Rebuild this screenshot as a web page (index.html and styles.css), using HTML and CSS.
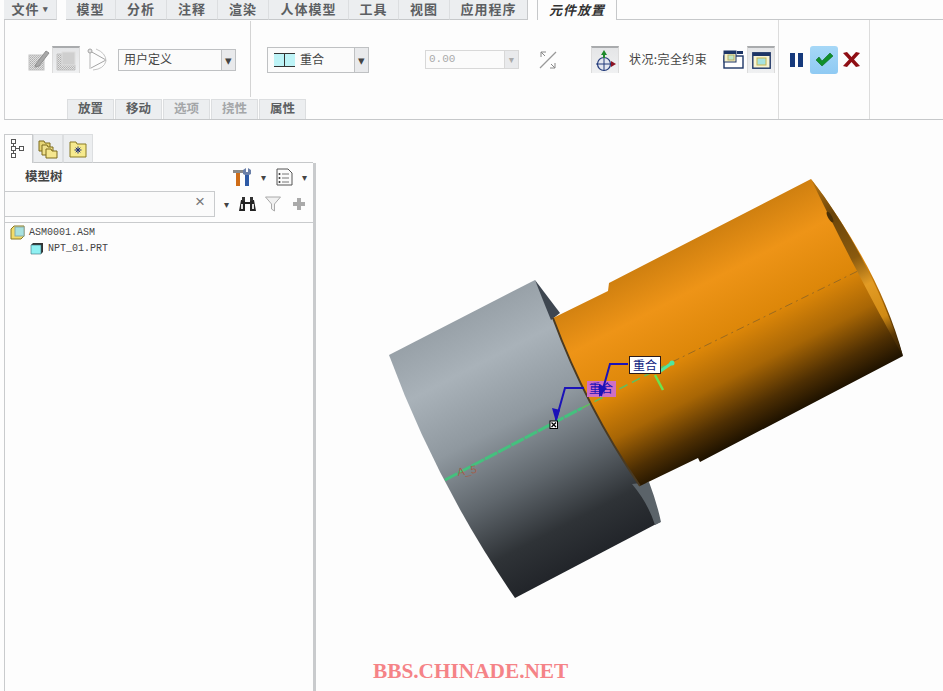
FILE: index.html
```html
<!DOCTYPE html>
<html lang="zh">
<head>
<meta charset="utf-8">
<title>元件放置</title>
<link rel="stylesheet" href="styles.css">
</head>
<body>
<div class="page">
  <header class="ribbon">
    <nav class="tabbar">
      <div class="tab tab-file">文件 <span class="caret-small">▾</span></div>
      <div class="tab-group">
        <div class="tab w50">模型</div>
        <div class="tab w51">分析</div>
        <div class="tab w51">注释</div>
        <div class="tab w51">渲染</div>
        <div class="tab w80">人体模型</div>
        <div class="tab w50">工具</div>
        <div class="tab w51">视图</div>
        <div class="tab w78">应用程序</div>
      </div>
      <div class="tab tab-active">元件放置</div>
      <div class="tabbar-rest"></div>
    </nav>
    <div class="ribbon-body">
      <div class="ribbon-main">
        <div class="controls">
          <svg class="ic ic-a" width="22" height="22" viewBox="0 0 22 22"><defs><pattern id="hatch" width="2" height="2" patternUnits="userSpaceOnUse"><rect width="2" height="2" fill="#e0e0e0"/><rect width="1" height="1" fill="#b0b0b0"/><rect x="1" y="1" width="1" height="1" fill="#bcbcbc"/></pattern></defs><rect x="1" y="6" width="15" height="15" fill="url(#hatch)" stroke="#c4c4c4"/><path d="M8 15 L18 2 L21 4 L11 17 L7 18 Z" fill="#a8a8a8" stroke="#8f8f8f"/></svg>
          <div class="toggle toggle-on">
            <svg width="20" height="20" viewBox="0 0 20 20"><path d="M1 3h5v11h13v5H1z" fill="url(#hatch)" stroke="#c4c4c4"/><rect x="6" y="1" width="13" height="13" fill="#cfcfcf" stroke="#dedede"/></svg>
          </div>
          <svg class="ic ic-c" width="20" height="24" viewBox="0 0 20 24"><path d="M3 3 L19 12 L4 20" fill="none" stroke="#a5a5a5"/><path d="M3 3 V21" stroke="#b5b5b5" fill="none"/><path d="M9 1 Q19 5 19 13 Q17 21 6 22" fill="none" stroke="#c4c4c4"/><circle cx="3" cy="3" r="2" fill="#e2e2e2" stroke="#a5a5a5"/></svg>
          <div class="select select-user"><span class="select-text">用户定义</span><span class="select-btn">▾</span></div>
          <div class="ribbon-sep"></div>
          <div class="select select-constraint">
            <svg width="21" height="14" viewBox="0 0 21 14"><rect width="21" height="14" fill="#bdf3f6"/><path d="M0 .5h21M0 13.5h21M10.5 0v14" stroke="#333" fill="none"/></svg>
            <span class="select-text">重合</span><span class="select-btn">▾</span>
          </div>
          <div class="select select-offset"><span class="select-text muted">0.00</span><span class="select-btn muted">▾</span></div>
          <svg class="ic ic-flip" width="18" height="20" viewBox="0 0 18 20"><path d="M1 18 L17 2" stroke="#999" stroke-width="1.3"/><path d="M2 2h5M2 2v5M2 2l4 4" stroke="#888" fill="none"/><path d="M16 18h-5M16 18v-5M16 18l-4-4" stroke="#888" fill="none"/></svg>
          <div class="toggle toggle-move">
            <svg width="24" height="24" viewBox="0 0 24 24"><circle cx="11" cy="15" r="6.5" fill="#e3e6ef" stroke="#223a7a" stroke-width="1.2"/><path d="M3 15h16M11 7v15" stroke="#223a7a"/><path d="M11 1 L14 6 L8 6 Z" fill="#1f8a2c"/><path d="M11 6v3" stroke="#1f8a2c" stroke-width="2"/><path d="M23 15 L18 12 V18 Z" fill="#8c1222"/></svg>
          </div>
          <span class="status">状况:完全约束</span>
          <svg class="ic ic-win1" width="21" height="19" viewBox="0 0 21 19"><rect x="1" y="6" width="19" height="12" fill="#fff" stroke="#1d3566" stroke-width="1.4"/><rect x="1" y="1" width="12" height="11" fill="#f5f0c8" stroke="#1d3566"/><rect x="1" y="1" width="12" height="3" fill="#1d3566"/><rect x="5" y="5" width="6" height="5" fill="#bfe6c8" stroke="#b9ae66"/><rect x="14" y="1" width="6" height="3" fill="#1d3566"/></svg>
          <div class="toggle toggle-win">
            <svg width="19" height="17" viewBox="0 0 19 17"><rect x=".8" y=".8" width="17.4" height="15.4" fill="#f7f3d3" stroke="#1d3566" stroke-width="1.4"/><rect x="1" y="1" width="17" height="3" fill="#1d3566"/><rect x="5" y="6" width="9" height="7" fill="#a6e2e0" stroke="#c8b64e"/></svg>
          </div>
        </div>
        <div class="subtabs">
          <div class="subtab">放置</div>
          <div class="subtab">移动</div>
          <div class="subtab subtab-off">选项</div>
          <div class="subtab subtab-off">挠性</div>
          <div class="subtab">属性</div>
        </div>
      </div>
      <div class="actions">
        <svg class="act-pause" width="13" height="14" viewBox="0 0 13 14"><rect width="5" height="14" fill="#16397c"/><rect x="8" width="5" height="14" fill="#16397c"/></svg>
        <div class="act-ok">
          <svg width="18" height="15" viewBox="0 0 18 15"><path d="M1 8 L4 5 L7 9 L15 1 L18 4 L7 14 Z" fill="#0f8f2a" stroke="#0a6b1e" stroke-width=".6"/></svg>
        </div>
        <svg class="act-x" width="17" height="15" viewBox="0 0 17 15"><path d="M0 1 L4 0 L8.500 5 L13 0 L17 1 L11 7.500 L17 14 L13 15 L8.500 10 L4 15 L0 14 L6 7.500 Z" fill="#8f0e14"/></svg>
      </div>
      <div class="ribbon-fill"></div>
    </div>
  </header>

  <main class="workspace">
    <aside class="side">
      <div class="side-tabs">
        <div class="stab stab-on">
          <svg width="16" height="20" viewBox="0 0 16 20"><g fill="#fff" stroke="#555"><rect x=".5" y=".5" width="4" height="4"/><rect x=".5" y="7.500" width="4" height="4"/><rect x=".5" y="14.500" width="4" height="4"/><rect x="8.500" y="7.500" width="4" height="4"/></g><path d="M2.500 5v2M2.500 12v2M5 9.500h3" stroke="#555"/></svg>
        </div>
        <div class="stab">
          <svg width="20" height="20" viewBox="0 0 20 20"><g stroke="#7d6a1c" fill="#e6d475"><path d="M1 5V2h5l1 2h5v8H1z"/><path d="M4 9V6h5l1 2h5v8H4z" fill="#efe08c"/><path d="M8 13v-3h5l1 2h5v7H8z" fill="#f5e68f"/></g></svg>
        </div>
        <div class="stab">
          <svg width="18" height="18" viewBox="0 0 18 18"><path d="M1 4V2h6l1 2h9v13H1z" fill="#f6ea8e" stroke="#8a7a25"/><path d="M9 6.500v7M5.500 10h7M6.700 7.700l4.600 4.600M11.300 7.700l-4.600 4.600" stroke="#1b2d7a"/></svg>
        </div>
        <div class="stab-rest"></div>
      </div>
      <div class="panel">
        <div class="panel-head">
          <span class="panel-title">模型树</span>
          <svg class="tool-hammer" width="19" height="20" viewBox="0 0 19 20"><path d="M0 3h10l1 3H7v13H3V6H0z" fill="#8a8a8a"/><rect x="3" y="6" width="4" height="13" fill="#cf6d18"/><path d="M13 1 L13 5 L15 5 L15 1 L18 3 L18 7 L16 8 V19 H12 V8 L10 7 V3 Z" fill="#6a7fa8"/><rect x="12" y="8" width="4" height="11" fill="#2e5aa6"/></svg>
          <span class="mini-caret mc1">▾</span>
          <svg class="tool-doc" width="17" height="18" viewBox="0 0 17 18"><path d="M1 1h11l4 4v12H1z" fill="#fbfbfb" stroke="#555"/><path d="M6 6h7M6 10h7M6 14h7" stroke="#777"/><circle cx="3.500" cy="6" r="1" fill="#333"/><circle cx="3.500" cy="10" r="1" fill="#333"/><circle cx="3.500" cy="14" r="1" fill="#333"/></svg>
          <span class="mini-caret mc2">▾</span>
        </div>
        <div class="panel-search">
          <div class="search-box"><span class="search-x">×</span></div>
          <span class="mini-caret mc3">▾</span>
          <svg class="tool-bino" width="17" height="16" viewBox="0 0 17 16"><path d="M2 4h4v2h5V4h4l2 11h-6V8H6v7H0z" fill="#222"/><rect x="3" y="1" width="3" height="4" fill="#333"/><rect x="11" y="1" width="3" height="4" fill="#333"/><rect x="2" y="8" width="2" height="5" fill="#ddd"/><rect x="13" y="8" width="2" height="5" fill="#ddd"/></svg>
          <svg class="tool-funnel" width="16" height="16" viewBox="0 0 16 16"><path d="M.5 1h15L9.500 8v7l-3-2V8z" fill="#f1f1f1" stroke="#aaa"/></svg>
          <svg class="tool-plus" width="12" height="12" viewBox="0 0 12 12"><path d="M4 0h4v4h4v4H8v4H4V8H0V4h4z" fill="#aaa"/></svg>
        </div>
        <ul class="tree">
          <li class="tree-row">
            <svg width="16" height="15" viewBox="0 0 16 15"><path d="M1 4 L4 1 H14 V11 L11 14 H1 Z" fill="#f3dc6a" stroke="#8a7a25"/><rect x="5" y="2" width="9" height="9" fill="#a8e2e0" stroke="#8aa"/></svg>
            <span>ASM0001.ASM</span>
          </li>
          <li class="tree-row tree-child">
            <svg width="14" height="13" viewBox="0 0 14 13"><path d="M1 3 L3 1 H13 V10 L11 12 H1 Z" fill="#333"/><path d="M1 3 H11 V12 H1 Z" fill="#8ff0f2" stroke="#3a6f78" stroke-width=".6"/></svg>
            <span>NPT_01.PRT</span>
          </li>
        </ul>
      </div>
    </aside>
    <div class="divider"></div>
    <section class="viewport">
      <svg class="model" width="627" height="571" viewBox="316 120 627 571">
        <defs>
          <linearGradient id="gGray" gradientUnits="userSpaceOnUse" x1="535" y1="280" x2="660" y2="522">
            <stop offset="0" stop-color="#98a1a8"/>
            <stop offset=".18" stop-color="#a9b2b9"/>
            <stop offset=".42" stop-color="#8f989f"/>
            <stop offset=".65" stop-color="#5f666c"/>
            <stop offset=".85" stop-color="#2f3337"/>
            <stop offset="1" stop-color="#22252a"/>
          </linearGradient>
          <linearGradient id="gOrange" gradientUnits="userSpaceOnUse" x1="811" y1="179" x2="903" y2="356">
            <stop offset="0" stop-color="#d08010"/>
            <stop offset=".22" stop-color="#ee9417"/>
            <stop offset=".5" stop-color="#dd8709"/>
            <stop offset=".7" stop-color="#a86605"/>
            <stop offset=".88" stop-color="#4e2f03"/>
            <stop offset="1" stop-color="#1e1200"/>
          </linearGradient>
          <linearGradient id="gEnd" gradientUnits="userSpaceOnUse" x1="811" y1="179" x2="903" y2="356">
            <stop offset="0" stop-color="#c07a12"/>
            <stop offset=".2" stop-color="#6a4409"/>
            <stop offset=".45" stop-color="#8a5a0e"/>
            <stop offset=".6" stop-color="#e39c25"/>
            <stop offset=".78" stop-color="#d08a14"/>
            <stop offset=".88" stop-color="#5c3906"/>
            <stop offset="1" stop-color="#2b1a02"/>
          </linearGradient>
        </defs>
        <!-- grey part -->
        <path d="M389,355 L535,280 L660,522 L515,598 Q436,483 389,355 Z" fill="url(#gGray)"/>
        <path d="M535,280 L560,313 L551,320 Q544,303 535,280 Z" fill="#3e4650"/>
        <path d="M632,484 L649,482 Q657,503 661,522 L655,525 Q648,503 632,484 Z" fill="#5b6369"/>
        <!-- orange part -->
        <path d="M553,318 L608,291 L609,283 L811,179 Q880,270 903,356 L700,462 L698,458 L640,486 Q586,407 553,318 Z" fill="url(#gOrange)"/>
        <path d="M811,179 C845,222 880,285 903,356 C885,325 845,250 811,179 Z" fill="url(#gEnd)"/>
        <ellipse cx="830" cy="217" rx="2" ry="6" transform="rotate(-30 830 217)" fill="#4a3007"/>
        <path d="M553,318 Q586,407 640,486" fill="none" stroke="#4a3a22" stroke-width="2"/>
        <!-- axis -->
        <path d="M672,362 L860,270" stroke="#9a6a20" stroke-width="1" stroke-dasharray="8 4 2 4" fill="none"/>
        <path d="M445,480 L582,408" stroke="#45c07e" stroke-width="3" stroke-dasharray="14 1" fill="none"/>
        <path d="M582,408 L672,362" stroke="#5fbf60" stroke-width="1.500" stroke-dasharray="9 5" fill="none"/>
        <path d="M655,375 L663,390" stroke="#6be34f" stroke-width="2.500"/>
        <path d="M659,372 L672,363" stroke="#4fe6a0" stroke-width="3"/>
        <circle cx="672" cy="363" r="2.500" fill="#4fe6a0"/>
        <text class="axis-text" x="458" y="476" transform="rotate(-10 458 476)">A_5</text>
        <!-- constraint labels -->
        <rect class="tag-pink" x="587" y="381" width="29" height="16"/>
        <path d="M584,388 H565 L556,420" class="lead"/>
        <path d="M556,422 L552,408 L560,410 Z" fill="#1b12b8"/>
        <path d="M628,364 H610 L601,396" class="lead"/>
        <path d="M599,397 L599,384 L607,388 Z" fill="#1b12b8"/>
        <text class="tag-text" x="589" y="393">重合</text>
        <rect class="tag-box" x="629.500" y="356.500" width="31" height="17"/>
        <text class="tag-text tag-dark" x="633" y="370">重合</text>
        <rect x="550" y="421" width="7.500" height="7.500" fill="#fff" stroke="#000"/>
        <path d="M551.500,422.500 L556,427 M556,422.500 L551.500,427" stroke="#000" stroke-width="1.300"/>
      </svg>
      <div class="watermark">BBS.CHINADE.NET</div>
    </section>
  </main>
</div>
</body>
</html>
```

FILE: styles.css
```css
* { box-sizing: border-box; }
html, body { margin: 0; padding: 0; height: 100%; background: #fdfdfd; }
body { font-family: "Noto Sans CJK SC", "Liberation Sans", sans-serif; font-size: 12px; color: #444; overflow: hidden; }
svg { display: block; flex: none; }
.page { width: 943px; height: 691px; display: flex; flex-direction: column; }

/* ribbon */
.ribbon { height: 120px; flex: none; padding-left: 4px; display: flex; flex-direction: column; }
.tabbar { height: 20px; display: flex; flex: none; }
.tab { height: 20px; display: flex; align-items: center; justify-content: center; padding-bottom: 2px; background: #eceef0; border-bottom: 1px solid #c6c8ca; border-right: 1px solid #dcdee0; font-weight: 700; font-size: 13px; letter-spacing: 1px; line-height: 1; color: #5c5f62; }
.tab-file { width: 53px; gap: 3px; }
.caret-small { font-size: 9px; }
.tab-group { display: flex; margin-left: 9px; }
.w50 { width: 50px; }
.w51 { width: 51px; }
.w78 { width: 78px; border-right: 1px solid #c6c8ca; }
.w80 { width: 80px; }
.tab-active { width: 80px; margin-left: 9px; background: #fdfdfd; border: 1px solid #c6c8ca; border-top: 0; border-bottom: 0; font-style: italic; color: #333; }
.tabbar-rest { flex: 1; border-bottom: 1px solid #c6c8ca; }

.ribbon-body { flex: 1; display: flex; border-left: 1px solid #cfd0d2; border-bottom: 1px solid #c6c8ca; }
.ribbon-main { width: 774px; display: flex; flex-direction: column; border-right: 1px solid #dcdcdc; }
.controls { height: 79px; display: flex; align-items: center; flex: none; }
.ic-a { margin-left: 23px; }
.toggle { width: 28px; height: 27px; display: flex; align-items: center; justify-content: center; background: linear-gradient(#e4e5e7, #f0f1f2); border-top: 2px solid #a9abad; border-left: 1px solid #dcdcdc; border-right: 1px solid #dcdcdc; }
.toggle-on { margin-left: 2px; }
.ic-c { margin-left: 7px; }
.select { display: flex; align-items: center; background: #fbfbfb; border: 1px solid #bfc1c3; }
.select-text { flex: 1; font-size: 12px; line-height: 1; color: #444; padding-bottom: 2px; }
.select-btn { width: 14px; align-self: stretch; display: flex; align-items: center; justify-content: center; background: #e9eaec; border-left: 1px solid #bfc1c3; font-size: 13px; color: #444; }
.select-user { width: 118px; height: 22px; margin-left: 11px; padding-left: 5px; }
.ribbon-sep { width: 1px; height: 76px; background: #d4d4d4; margin-left: 14px; align-self: flex-end; margin-bottom: 2px; }
.select-constraint { width: 102px; height: 26px; margin-left: 16px; padding-left: 6px; gap: 5px; }
.select-offset { width: 94px; height: 19px; margin-left: 56px; padding-left: 3px; font-family: "Liberation Mono", monospace; border-color: #d8d8d8; }
.select-offset .select-text { font-family: "Liberation Mono", monospace; font-size: 11px; padding-bottom: 0; }
.select-offset .select-btn { border-left-color: #d8d8d8; width: 14px; }
.muted { color: #aaa !important; }
.ic-flip { margin-left: 20px; }
.toggle-move { margin-left: 34px; }
.status { margin-left: 10px; padding-bottom: 2px; font-size: 12px; letter-spacing: .4px; line-height: 1; color: #444; width: 78px; white-space: nowrap; }
.ic-win1 { margin-left: 16px; }
.toggle-win { margin-left: 3px; }

.subtabs { display: flex; margin-left: 62px; gap: 1px; height: 20px; }
.subtab { width: 47px; display: flex; align-items: center; justify-content: center; padding-bottom: 2px; background: #eceef0; border: 1px solid #dcdee0; border-bottom: 0; font-weight: 700; font-size: 12.500px; line-height: 1; color: #5c5f62; }
.subtab-off { color: #a4a6a8; }

.actions { width: 90px; display: flex; align-items: center; height: 79px; border-right: 1px solid #dcdcdc; flex: none; box-sizing: content-box; padding-bottom: 20px; padding-right: 0; }
.act-pause { margin-left: 11px; }
.act-ok { width: 28px; height: 28px; margin-left: 7px; display: flex; align-items: center; justify-content: center; background: linear-gradient(#a6d8f7, #8fcaf3); border-radius: 3px; }
.act-x { margin-left: 5px; }
.ribbon-fill { flex: 1; }

/* workspace */
.workspace { flex: 1; display: flex; min-height: 0; }
.side { width: 313px; flex: none; padding: 14px 0 0 4px; display: flex; flex-direction: column; }
.side-tabs { display: flex; height: 29px; flex: none; }
.stab { width: 30px; display: flex; align-items: center; justify-content: center; background: #eceef0; border: 1px solid #dcdee0; border-bottom: 1px solid #c6c8ca; }
.stab-on { width: 29px; background: #fdfdfd; border-color: #c9cbcd; border-bottom: 0; }
.stab-rest { flex: 1; border-bottom: 1px solid #c6c8ca; }
.panel { flex: 1; border-left: 1px solid #c9cbcd; }
.panel-head { height: 28px; display: flex; align-items: center; padding-bottom: 1px; }
.panel-title { margin-left: 20px; width: 208px; font-weight: 700; font-size: 12.500px; line-height: 1; color: #444; }
.mini-caret { font-size: 10px; line-height: 1; color: #444; }
.mc1 { margin-left: 9px; }
.tool-doc { margin-left: 10px; }
.mc2 { margin-left: 9px; }
.panel-search { height: 32px; display: flex; align-items: flex-start; border-bottom: 1px solid #c9cbcd; }
.search-box { width: 210px; height: 26px; background: #fbfbfb; border: 1px solid #c9cbcd; border-left: 0; display: flex; align-items: center; justify-content: flex-end; padding: 0 9px 5px 0; }
.search-x { font-size: 17px; line-height: 1; color: #777; font-family: "Liberation Sans", sans-serif; }
.mc3 { margin-left: 9px; margin-top: 8px; }
.tool-bino { margin-left: 10px; margin-top: 5px; }
.tool-funnel { margin-left: 9px; margin-top: 5px; }
.tool-plus { margin-left: 12px; margin-top: 7px; }
.tree { list-style: none; margin: 0; padding: 1px 0 0 5px; font-family: "Liberation Mono", monospace; font-size: 10px; color: #444; }
.tree-row { height: 16px; display: flex; align-items: center; gap: 3px; }
.tree-child { padding-left: 20px; gap: 4px; }

.divider { width: 3px; flex: none; margin-top: 43px; background: #c9cbcd; }
.viewport { flex: 1; position: relative; min-width: 0; }
.axis-text { font-family: "Liberation Sans", sans-serif; font-size: 11px; fill: #a0604c; }
.lead { fill: none; stroke: #1b12b8; stroke-width: 2; }
.tag-pink { fill: #cf6fc4; }
.tag-box { fill: #fff; stroke: #2a1a1a; stroke-width: 1; }
.tag-text { font-family: "Noto Sans CJK SC", sans-serif; font-size: 12px; fill: #1b12b8; }
.tag-dark { fill: #0d1a80; }
.watermark { position: absolute; left: 57px; top: 541px; font-family: "Liberation Serif", serif; font-weight: 700; font-size: 21.300px; line-height: 1; color: #f58387; white-space: nowrap; }
```
